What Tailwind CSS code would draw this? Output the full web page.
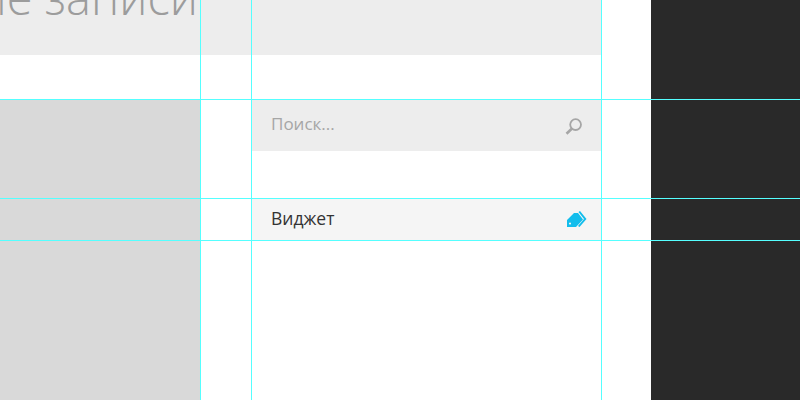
<!DOCTYPE html>
<html>
<head>
<meta charset="utf-8">
<title>Блог</title>
<script src="https://cdn.jsdelivr.net/npm/@tailwindcss/browser@4"></script>
</head>
<body class="bg-white overflow-hidden font-['Open_Sans',sans-serif]">
  <div class="relative flex w-[800px] h-[400px] overflow-hidden">
    <div class="w-[651px] shrink-0">
      <div class="w-[601px] h-[55px] bg-[#ededed] overflow-hidden relative">
        <h1 class="absolute right-[403px] top-[-33px] whitespace-nowrap text-[47px] leading-[60px] font-light text-[#9c9c9c]">Последние записи</h1>
      </div>
      <div class="flex mt-[45px] h-[300px]">
        <div class="w-[200px] h-full bg-[#d9d9d9]"></div>
        <aside class="ml-[52px] w-[349px]">
          <div class="h-[51px] bg-[#ededed] flex items-center justify-between pl-[19px] pr-[18px]">
            <span class="text-[17px] leading-[24px] mt-[-3px] text-[#a6a6a6]">Поиск...</span>
            <svg width="18" height="18" viewBox="0 0 18 18" fill="none" stroke="#a6a6a6">
              <circle cx="10.6" cy="7.6" r="5.4" stroke-width="1.8"/>
              <path d="M7 11.5 L1.5 16.8" stroke-width="2.6"/>
            </svg>
          </div>
          <div class="mt-[48px] h-[41px] bg-[#f5f5f5] flex items-center justify-between pl-[19px] pr-[14px]">
            <span class="text-[17.5px] leading-[24px] mt-[-4px] text-[#333333]">Виджет</span>
            <svg width="20" height="17" viewBox="0 0 20 17" fill="#12bdec" class="mt-[-1px]">
              <path d="M0 9 L7 2 H11 L16 8.5 L9 16 H0 Z M3 11.5 a1 1 0 1 0 0.01 0 Z" fill-rule="evenodd"/>
              <path d="M11.5 1 L13 0 L19.5 8 L12.5 16 L11 15 L17 8 Z"/>
            </svg>
          </div>
        </aside>
      </div>
    </div>
    <div class="flex-1 bg-[#292929]"></div>

    <!-- guides -->
    <div class="absolute left-[200px] top-0 w-px h-full bg-[#55ffff]"></div>
    <div class="absolute left-[251px] top-0 w-px h-full bg-[#55ffff]"></div>
    <div class="absolute left-[601px] top-0 w-px h-full bg-[#55ffff]"></div>
    <div class="absolute left-0 top-[99px] h-px w-full bg-[#55ffff]"></div>
    <div class="absolute left-0 top-[198px] h-px w-full bg-[#55ffff]"></div>
    <div class="absolute left-0 top-[240px] h-px w-full bg-[#55ffff]"></div>
  </div>
</body>
</html>
